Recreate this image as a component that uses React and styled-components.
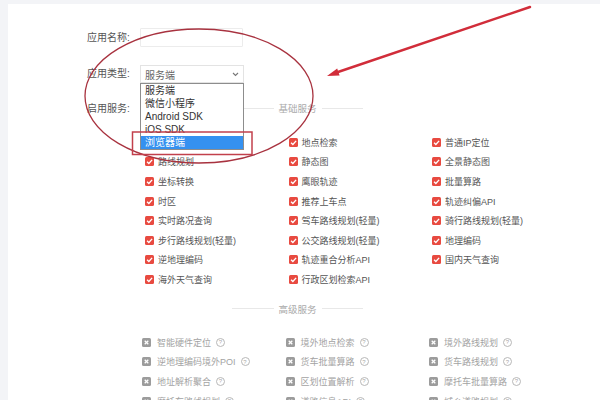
import styled, { createGlobalStyle } from 'styled-components';

const GlobalStyle = createGlobalStyle`
  html, body {
    margin: 0;
    padding: 0;
    background: #f3f4f7;
  }
  body {
    font-family: "Liberation Sans", "Noto Sans CJK SC", sans-serif;
  }
`;

// first cell sits under the open select list, so it is left empty
const basicServices = [
  null, '地点检索', '普通IP定位',
  '路线规划', '静态图', '全景静态图',
  '坐标转换', '鹰眼轨迹', '批量算路',
  '时区', '推荐上车点', '轨迹纠偏API',
  '实时路况查询', '驾车路线规划(轻量)', '骑行路线规划(轻量)',
  '步行路线规划(轻量)', '公交路线规划(轻量)', '地理编码',
  '逆地理编码', '轨迹重合分析API', '国内天气查询',
  '海外天气查询', '行政区划检索API',
];

const advancedServices = [
  '智能硬件定位', '境外地点检索', '境外路线规划',
  '逆地理编码境外POI', '货车批量算路', '货车路线规划',
  '地址解析聚合', '区划位置解析', '摩托车批量算路',
  '摩托车路线规划', '道路信息API', '城乡道路规划',
];

const appTypes = ['服务端', '微信小程序', 'Android SDK', 'iOS SDK', '浏览器端'];

const App = () => {
  return (
    <Page>
      <GlobalStyle />
      <Panel>
        <FormRow>
          <Label>应用名称:</Label>
          <TextInput />
        </FormRow>

        <FormRow $gap={18}>
          <Label>应用类型:</Label>
          <SelectWrap>
            <SelectBox>
              <span>服务端</span>
              <svg width="7" height="5" viewBox="0 0 7 5">
                <path d="M1 1l2.5 2.5L6 1" fill="none" stroke="#777" strokeWidth="1.1" />
              </svg>
            </SelectBox>
            <OptionList>
              {appTypes.map((t) => (
                <Option key={t} $active={t === '浏览器端'}>
                  {t}
                </Option>
              ))}
            </OptionList>
          </SelectWrap>
        </FormRow>

        <FormRow $gap={19} $top>
          <Label $offset={1}>启用服务:</Label>
          <Services>
            <Divider>
              <span>基础服务</span>
            </Divider>
            <ServiceGrid $mt={18.6} $pl={5}>
              {basicServices.map((name, i) =>
                name ? (
                  <Item key={name}>
                    <CheckBox>
                      <svg width="9" height="9" viewBox="0 0 10 10">
                        <path d="M2.3 5.2l2 2 3.6-4" fill="none" stroke="#fff" strokeWidth="1.5" />
                      </svg>
                    </CheckBox>
                    {name}
                  </Item>
                ) : (
                  <Item key={`empty-${i}`} />
                )
              )}
            </ServiceGrid>

            <Divider $mt={13.3}>
              <span>高级服务</span>
            </Divider>
            <ServiceGrid $mt={17.8} $pl={2}>
              {advancedServices.map((name) => (
                <Item key={name} $disabled>
                  <CrossBox>
                    <svg width="9" height="9" viewBox="0 0 10 10">
                      <path d="M3 3l4 4M7 3l-4 4" fill="none" stroke="#fff" strokeWidth="1.4" />
                    </svg>
                  </CrossBox>
                  {name}
                  <Help>?</Help>
                </Item>
              ))}
            </ServiceGrid>
          </Services>
        </FormRow>
      </Panel>

      {/* hand-drawn markup on top of the form */}
      <Markup width="600" height="400" viewBox="0 0 600 400">
        <ellipse cx="199" cy="96" rx="114" ry="67" fill="none" stroke="#a8323f" strokeWidth="1.3" />
        <rect x="132.5" y="132" width="119.5" height="22.5" fill="none" stroke="#c2404c" strokeWidth="1.5" />
        <line x1="530" y1="7" x2="338" y2="72" stroke="#d12d3a" strokeWidth="2.4" strokeLinecap="round" />
        <polygon points="327,76 339.6,75.6 337.2,68.6" fill="#d12d3a" />
      </Markup>
    </Page>
  );
};

const Page = styled.div`
  position: relative;
  width: 600px;
  height: 400px;
  overflow: hidden;
  box-sizing: border-box;
  padding: 4px 0 0 8px;
  background: #f3f4f7;
`;

const Panel = styled.div`
  height: 100%;
  box-sizing: border-box;
  padding: 24px 0 0 79px;
  background: #fff;
`;

const FormRow = styled.div`
  display: flex;
  align-items: ${(p) => (p.$top ? 'flex-start' : 'center')};
  margin-top: ${(p) => p.$gap || 0}px;
`;

const Label = styled.div`
  flex-shrink: 0;
  width: 53px;
  margin-top: ${(p) => p.$offset || 0}px;
  font-size: 10px;
  line-height: 12px;
  color: #555;
`;

const TextInput = styled.div`
  width: 103px;
  height: 19px;
  box-sizing: border-box;
  border: 1px solid #ececec;
  border-radius: 1px;
`;

const SelectWrap = styled.div`
  position: relative;
  z-index: 3;
`;

const SelectBox = styled.div`
  display: flex;
  align-items: center;
  justify-content: space-between;
  width: 104px;
  height: 18px;
  box-sizing: border-box;
  padding: 0 4px 0 4px;
  border: 1px solid #e3e3e3;
  font-size: 10px;
  color: #666;
`;

const OptionList = styled.div`
  position: absolute;
  top: 100%;
  left: 0;
  width: 104px;
  box-sizing: border-box;
  border: 1px solid #8d8d8d;
  background: #fff;
`;

const Option = styled.div`
  height: 13px;
  padding-left: 4px;
  font-size: 10px;
  line-height: 13px;
  color: ${(p) => (p.$active ? '#fff' : '#333')};
  background: ${(p) => (p.$active ? '#3591f0' : 'transparent')};
  white-space: nowrap;
`;

const Services = styled.div`
  display: flex;
  flex-direction: column;
`;

const Divider = styled.div`
  display: flex;
  align-items: center;
  gap: 5px;
  width: 131px;
  height: 12px;
  margin: ${(p) => p.$mt || 0}px 0 0 92px;
  font-size: 9.5px;
  color: #aaa;
  white-space: nowrap;

  &::before,
  &::after {
    content: '';
    flex: 1;
    height: 1px;
    background: #e8e8e8;
  }
`;

const ServiceGrid = styled.div`
  display: grid;
  grid-template-columns: repeat(3, 143.5px);
  grid-auto-rows: 19.6px;
  margin-top: ${(p) => p.$mt}px;
  padding-left: ${(p) => p.$pl}px;
`;

const Item = styled.div`
  display: flex;
  align-items: center;
  gap: ${(p) => (p.$disabled ? 6 : 4)}px;
  font-size: 9px;
  color: ${(p) => (p.$disabled ? '#a3a3a3' : '#555')};
  white-space: nowrap;
`;

const CheckBox = styled.span`
  display: flex;
  width: 9px;
  height: 9px;
  border-radius: 1.5px;
  background: #e84a40;
`;

const CrossBox = styled(CheckBox)`
  background: #9c9c9c;
`;

const Help = styled.span`
  display: inline-flex;
  align-items: center;
  justify-content: center;
  width: 7px;
  height: 7px;
  margin-left: -1px;
  border: 1px solid #b8b8b8;
  border-radius: 50%;
  font-size: 6px;
  line-height: 1;
  color: #aaa;
`;

const Markup = styled.svg`
  position: absolute;
  top: 0;
  left: 0;
  z-index: 5;
  pointer-events: none;
`;

export default App;
